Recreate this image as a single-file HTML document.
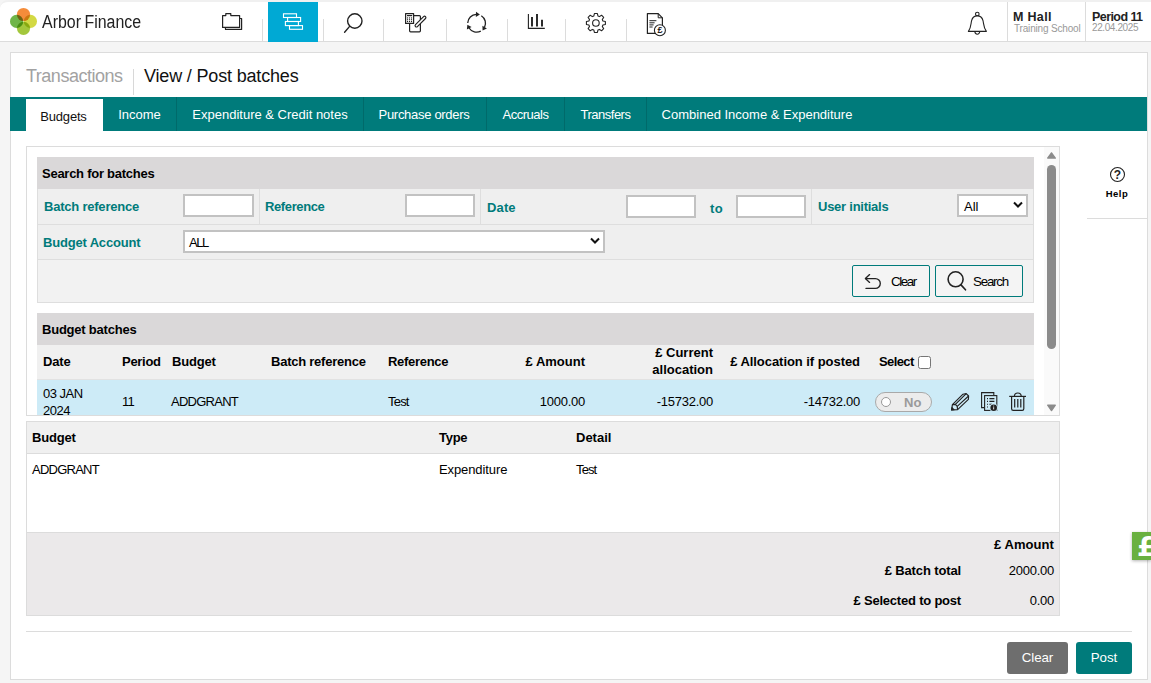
<!DOCTYPE html>
<html lang="en">
<head>
<meta charset="utf-8">
<title>Arbor Finance - View / Post batches</title>
<style>
*{box-sizing:border-box;margin:0;padding:0}
html,body{width:1151px;height:683px;overflow:hidden}
body{background:#f5f5f5;font-family:"Liberation Sans",sans-serif;font-size:13px;color:#000;position:relative}
.abs{position:absolute}
/* header */
#hdr{position:absolute;left:0;top:0;width:1151px;height:42px;background:#fff;border-top:2px solid #f0f0f0;border-bottom:1px solid #dcdcdc;border-top-left-radius:8px}
#hdr .sep{position:absolute;width:1px;background:#dcdcdc;top:17px;height:22px}
#hdr .vsep{position:absolute;width:1px;background:#dcdcdc;top:0;height:40px}
#logo-text{position:absolute;left:42px;top:8px;font-size:18px;line-height:24px;color:#222;white-space:nowrap;transform:scaleX(.885);transform-origin:0 0}
#nav-active{position:absolute;left:268px;top:0;width:50px;height:40px;background:#00a9d4}
.uname{position:absolute;font-weight:bold;font-size:12.5px;line-height:14px;white-space:nowrap;color:#222}
.usub{position:absolute;font-size:10px;line-height:12px;white-space:nowrap;color:#999}
/* panel */
#panel{position:absolute;left:10px;top:52px;width:1138px;height:628px;background:#fff;border:1px solid #dcdcdc}
#crumb1{position:absolute;left:26px;top:64px;font-size:18px;line-height:24px;color:#a2a2a2;white-space:nowrap}
#crumbsep{position:absolute;left:133px;top:69px;width:1px;height:26px;background:#d8d8d8}
#crumb2{position:absolute;left:144px;top:64px;font-size:18px;line-height:24px;color:#111;white-space:nowrap}
#tabs{position:absolute;left:10px;top:97px;width:1137px;height:34px;background:#007b7b}
.tab{position:absolute;top:0;height:34px;line-height:36px;color:#fff;font-size:13px;text-align:center;white-space:nowrap;border-right:1px solid #006a6a}
.tab.on{top:2px;height:32px;line-height:36px;background:#fff;color:#111;border-right:0}
/* scroll box */
#sbox{position:absolute;left:26px;top:146px;width:1034px;height:270px;border:1px solid #dcdcdc;background:#fff;overflow:hidden}
#strack{position:absolute;left:1044px;top:147px;width:15px;height:268px;background:#fafafa}
#sthumb{position:absolute;left:1047px;top:165px;width:9px;height:184px;border-radius:5px;background:#8b8b8b}
.sect-h{position:absolute;left:37px;width:997px;height:32px;background:#dad8d9;font-weight:bold;font-size:13px;line-height:34px;padding-left:5px}
.lbl{position:absolute;font-weight:bold;color:#007b7b;font-size:13px;line-height:16px;white-space:nowrap}
.inp{position:absolute;height:23px;background:#fff;border:2px solid #c2c2c2}
.th{position:absolute;font-weight:bold;font-size:13px;line-height:17px;white-space:nowrap}
.td{position:absolute;font-size:13px;line-height:17px;white-space:nowrap}
.r{text-align:right}
.btn2{position:absolute;height:32px;border:1px solid #007b7b;border-radius:2px;background:#f4f4f4;font-size:13.33px;line-height:32px;color:#000;white-space:nowrap}
.fbtn{position:absolute;top:642px;height:32px;border-radius:3px;color:#fff;font-size:13.33px;line-height:32px;text-align:center}
</style>
<style id="fit">
#crumb1{letter-spacing:-0.49px;margin-left:0px;}
#crumb2{letter-spacing:-0.17px;margin-left:0px;}
#t1{letter-spacing:-0.2px;position:relative;left:-1px;}
#t2{letter-spacing:-0.0px;position:relative;left:0px;}
#t3{letter-spacing:0.0px;position:relative;left:0px;}
#t4{letter-spacing:-0.3px;position:relative;left:-1px;}
#t5{letter-spacing:-0.49px;position:relative;left:0px;}
#t6{letter-spacing:-0.51px;position:relative;left:0px;}
#t7{letter-spacing:0.0px;position:relative;left:-1px;}
#sh1{letter-spacing:-0.26px;position:relative;left:0px;}
#sh2{letter-spacing:-0.22px;position:relative;left:0px;}
#l1{letter-spacing:-0.22px;margin-left:1px;}
#l2{letter-spacing:-0.38px;margin-left:1px;}
#l3{letter-spacing:0.13px;margin-left:1px;}
#l4{letter-spacing:0.3px;margin-left:0px;}
#l5{letter-spacing:-0.25px;margin-left:0px;}
#l6{letter-spacing:-0.18px;margin-left:0px;}
#h1{letter-spacing:-0.13px;margin-left:0px;}
#h2{letter-spacing:-0.28px;margin-left:1px;}
#h3{letter-spacing:-0.2px;margin-left:1px;}
#h4{letter-spacing:-0.24px;margin-left:1px;}
#h5{letter-spacing:-0.3px;margin-left:0px;}
#h6{letter-spacing:0.0px;margin-right:0px;}
#h8{letter-spacing:-0.05px;margin-right:0px;}
#h9{letter-spacing:-0.6px;margin-left:1px;}
#d2{letter-spacing:-0.8px;margin-left:0px;}
#d3{letter-spacing:-0.74px;margin-left:0px;}
#d5{letter-spacing:-0.8px;margin-left:0px;}
#d6{letter-spacing:-0.25px;margin-right:0px;}
#d7{letter-spacing:-0.25px;margin-right:0px;}
#d8{letter-spacing:-0.25px;margin-right:0px;}
#e1{letter-spacing:-0.18px;margin-left:0px;}
#e2{letter-spacing:-0.27px;margin-left:0px;}
#e3{letter-spacing:0.0px;margin-left:1px;}
#f1{letter-spacing:-0.76px;margin-left:0px;}
#f2{letter-spacing:-0.1px;margin-left:0px;}
#f3{letter-spacing:-0.87px;margin-left:1px;}
#g1{letter-spacing:0.07px;margin-right:0px;}
#g2{letter-spacing:-0.13px;margin-right:0px;}
#g3{letter-spacing:-0.25px;margin-right:0px;}
#g4{letter-spacing:-0.21px;margin-right:0px;}
#g5{letter-spacing:-0.25px;margin-right:0px;}
#u1{letter-spacing:0.32px;margin-left:0px;}
#u2{letter-spacing:-0.17px;margin-left:1px;}
#u3{letter-spacing:-0.57px;margin-left:1px;}
#u4{letter-spacing:-0.4px;margin-left:1px;}
#fb1{letter-spacing:-0.1px;position:relative;left:0px;}
#help{letter-spacing:0.5px;position:relative;left:0px;}
#bclear{letter-spacing:-1.4px;margin-left:2px;}
#bsearch{letter-spacing:-1.2px;margin-left:2px;}
#selALL{letter-spacing:-1.4px;margin-left:0px;}
#selall{letter-spacing:0.0px;margin-left:1px;}
</style>
</head>
<body>

<div id="hdr">
  <div id="logo-text"><span id="lg1">Arbor</span><span id="lg2" style="margin-left:4px">Finance</span></div>
  <div id="nav-active"></div>
  <div class="sep" style="left:262px"></div>
  <div class="sep" style="left:323px"></div>
  <div class="sep" style="left:383px"></div>
  <div class="sep" style="left:446px"></div>
  <div class="sep" style="left:507px"></div>
  <div class="sep" style="left:565px"></div>
  <div class="sep" style="left:626px"></div>
  <div class="vsep" style="left:1007px"></div>
  <div class="vsep" style="left:1085px"></div>
  <div class="uname" id="u1" style="left:1013px;top:8px">M Hall</div>
  <div class="usub" id="u2" style="left:1013px;top:21px">Training School</div>
  <div class="uname" id="u3" style="left:1091px;top:8px">Period 11</div>
  <div class="usub" id="u4" style="left:1091px;top:20px">22.04.2025</div>
</div>

<div id="panel"></div>
<div id="crumb1">Transactions</div>
<div id="crumbsep"></div>
<div id="crumb2">View / Post batches</div>

<div id="tabs">
  <div class="tab on" style="left:16px;width:77px"><span id="t1">Budgets</span></div>
  <div class="tab" style="left:93px;width:74px"><span id="t2">Income</span></div>
  <div class="tab" style="left:167px;width:187px"><span id="t3">Expenditure &amp; Credit notes</span></div>
  <div class="tab" style="left:354px;width:123px"><span id="t4">Purchase orders</span></div>
  <div class="tab" style="left:477px;width:78px"><span id="t5">Accruals</span></div>
  <div class="tab" style="left:555px;width:82px"><span id="t6">Transfers</span></div>
  <div class="tab" style="left:637px;width:222px;border-right:0"><span id="t7">Combined Income &amp; Expenditure</span></div>
</div>

<div id="sbox"></div>
<div id="strack"></div>
<div id="sthumb"></div>

<div class="sect-h" style="top:157px"><span id="sh1">Search for batches</span></div>
<div class="sect-h" style="top:313px"><span id="sh2">Budget batches</span></div>

<!-- search form -->
<div class="abs" style="left:37px;top:189px;width:997px;height:36px;background:#efefef;border:1px solid #dedede;border-top:0"></div>
<div class="abs" style="left:37px;top:225px;width:997px;height:35px;background:#efefef;border:1px solid #dedede;border-top:0"></div>
<div class="abs" style="left:37px;top:260px;width:997px;height:43px;background:#f2f2f2;border:1px solid #dedede;border-top:0"></div>
<div class="abs" style="left:259px;top:189px;width:1px;height:35px;background:#dedede"></div>
<div class="abs" style="left:480px;top:189px;width:1px;height:35px;background:#dedede"></div>
<div class="abs" style="left:811px;top:189px;width:1px;height:35px;background:#dedede"></div>
<div class="lbl" id="l1" style="left:43px;top:199px">Batch reference</div>
<div class="inp" style="left:183px;top:194px;width:71px"></div>
<div class="lbl" id="l2" style="left:264px;top:199px">Reference</div>
<div class="inp" style="left:405px;top:194px;width:70px"></div>
<div class="lbl" id="l3" style="left:486px;top:200px">Date</div>
<div class="inp" style="left:626px;top:195px;width:70px"></div>
<div class="lbl" id="l4" style="left:710px;top:201px">to</div>
<div class="inp" style="left:736px;top:195px;width:70px"></div>
<div class="lbl" id="l5" style="left:818px;top:199px">User initials</div>
<div class="inp" style="left:957px;top:194px;width:71px"></div>
<div class="td" id="selall" style="left:963px;top:198px">All</div>
<svg class="abs" style="left:1013px;top:201px" width="10" height="8" viewBox="0 0 10 8"><path d="M1 1.5 L5 5.5 L9 1.5" fill="none" stroke="#111" stroke-width="2"/></svg>
<div class="lbl" id="l6" style="left:43px;top:235px">Budget Account</div>
<div class="inp" style="left:183px;top:230px;width:422px"></div>
<div class="td" id="selALL" style="left:189px;top:234px">ALL</div>
<svg class="abs" style="left:590px;top:237px" width="10" height="8" viewBox="0 0 10 8"><path d="M1 1.5 L5 5.5 L9 1.5" fill="none" stroke="#111" stroke-width="2"/></svg>
<div class="btn2" style="left:852px;top:265px;width:78px"><span class="abs" id="bclear" style="left:36px;top:0">Clear</span></div>
<div class="btn2" style="left:935px;top:265px;width:88px"><span class="abs" id="bsearch" style="left:35px;top:0">Search</span></div>

<!-- batches table -->
<div class="abs" style="left:37px;top:345px;width:997px;height:35px;background:#f0f0f0;border-bottom:1px solid #e2e2e2"></div>
<div class="abs" style="left:37px;top:380px;width:997px;height:35px;background:#cdebf7"></div>
<div class="th" id="h1" style="left:43px;top:353px">Date</div>
<div class="th" id="h2" style="left:121px;top:353px">Period</div>
<div class="th" id="h3" style="left:171px;top:353px">Budget</div>
<div class="th" id="h4" style="left:270px;top:353px">Batch reference</div>
<div class="th" id="h5" style="left:388px;top:353px">Reference</div>
<div class="th r" id="h6" style="right:566px;top:353px">&pound; Amount</div>
<div class="th r" id="h7" style="right:438px;top:344px">&pound; Current<br>allocation</div>
<div class="th r" id="h8" style="right:291px;top:353px">&pound; Allocation if posted</div>
<div class="th" id="h9" style="left:878px;top:353px">Select</div>
<div class="abs" style="left:918px;top:356px;width:13px;height:13px;background:#fff;border:1px solid #767676;border-radius:2.5px"></div>
<div class="td" id="d1" style="left:43px;top:385px;letter-spacing:-0.5px">03 JAN<br>2024</div>
<div class="td" id="d2" style="left:122px;top:393px">11</div>
<div class="td" id="d3" style="left:171px;top:393px">ADDGRANT</div>
<div class="td" id="d5" style="left:388px;top:393px">Test</div>
<div class="td r" id="d6" style="right:566px;top:393px">1000.00</div>
<div class="td r" id="d7" style="right:438px;top:393px">-15732.00</div>
<div class="td r" id="d8" style="right:291px;top:393px">-14732.00</div>
<div class="abs" style="left:875px;top:392px;width:57px;height:20px;border:1px solid #a9a9a9;border-radius:10px;background:#ececec"></div>
<div class="abs" style="left:881px;top:397px;width:10px;height:10px;border:1px solid #999;border-radius:5px;background:#fff"></div>
<div class="abs" id="tno" style="left:904px;top:394px;font-weight:bold;font-size:13px;line-height:17px;color:#9a9a9a">No</div>

<!-- details -->
<div class="abs" style="left:26px;top:421px;width:1034px;height:195px;border:1px solid #dcdcdc;background:#fff"></div>
<div class="abs" style="left:27px;top:422px;width:1032px;height:32px;background:#f0f0f0;border-bottom:1px solid #dcdcdc"></div>
<div class="th" id="e1" style="left:32px;top:429px">Budget</div>
<div class="th" id="e2" style="left:439px;top:429px">Type</div>
<div class="th" id="e3" style="left:575px;top:429px">Detail</div>
<div class="td" id="f1" style="left:32px;top:461px">ADDGRANT</div>
<div class="td" id="f2" style="left:439px;top:461px">Expenditure</div>
<div class="td" id="f3" style="left:575px;top:461px">Test</div>
<div class="abs" style="left:27px;top:532px;width:1032px;height:83px;background:#ebe9ea;border-top:1px solid #dcdcdc"></div>
<div class="th r" id="g1" style="right:97px;top:536px">&pound; Amount</div>
<div class="th r" id="g2" style="right:190px;top:562px">&pound; Batch total</div>
<div class="td r" id="g3" style="right:97px;top:562px">2000.00</div>
<div class="th r" id="g4" style="right:190px;top:592px">&pound; Selected to post</div>
<div class="td r" id="g5" style="right:97px;top:592px">0.00</div>
<div class="abs" style="left:26px;top:631px;width:1106px;height:1px;background:#dcdcdc"></div>

<!-- help -->
<div class="abs" style="left:1087px;top:189px;width:60px;text-align:center;font-weight:bold;font-size:9.5px;line-height:10px"><span id="help">Help</span></div>
<div class="abs" style="left:1087px;top:218px;width:60px;height:1px;background:#dcdcdc"></div>
<div class="abs" style="left:1132px;top:532px;width:19px;height:28px;background:#69b040;box-shadow:0 1px 3px rgba(0,0,0,.3);overflow:hidden"><span class="abs" id="pound" style="left:5px;top:1px;color:#fff;font-family:'DejaVu Sans',sans-serif;font-weight:bold;font-size:27px;line-height:28px">&pound;</span></div>

<div class="fbtn" style="left:1007px;width:61px;background:#6e6e6e"><span id="fb1">Clear</span></div>
<div class="fbtn" style="left:1076px;width:56px;background:#007b7b"><span id="fb2">Post</span></div>


<svg class="abs" style="left:0;top:0;pointer-events:none" width="1151" height="683" viewBox="0 0 1151 683">
  <!-- logo -->
  <g style="isolation:isolate">
    <circle cx="23.5" cy="14.5" r="6.6" fill="#f58c3a"/>
    <circle cx="16.6" cy="21.4" r="6.6" fill="#70b548" style="mix-blend-mode:multiply"/>
    <circle cx="30.4" cy="21.4" r="6.6" fill="#d3d944" style="mix-blend-mode:multiply"/>
    <circle cx="23.5" cy="28.3" r="6.6" fill="#a3c73c" style="mix-blend-mode:multiply"/>
  </g>
  <!-- folder -->
  <g fill="#fff" stroke="#222" stroke-width="1.2" stroke-linejoin="round">
    <path d="M225 18.5 H241.6 V29.4 H225.5 Z"/>
    <path d="M222.6 15.6 H225.8 V13.6 H230.8 V15.6 H239.6 V27.4 H222.6 Z"/>
  </g>
  <!-- stack (active) -->
  <g fill="none" stroke="#fff" stroke-width="1.1">
    <rect x="283.5" y="13.8" width="13" height="3.7"/>
    <rect x="287.6" y="17.5" width="13" height="4"/>
    <rect x="285.4" y="21.5" width="13" height="4.1"/>
    <rect x="289.5" y="25.6" width="13" height="3.7"/>
  </g>
  <!-- search -->
  <g fill="none" stroke="#222" stroke-width="1.4" stroke-linecap="round">
    <circle cx="354.8" cy="21" r="7.2"/>
    <path d="M349.6 26.4 L344.6 32.2"/>
  </g>
  <!-- calc + pen -->
  <g fill="#fff" stroke="#222" stroke-width="1.2" stroke-linejoin="round">
    <rect x="409.6" y="15.6" width="10.8" height="16.2" rx="1"/>
    <rect x="405.6" y="13.6" width="8" height="9.8"/>
    <path d="M423.6 16.6 a1.3 1.3 0 0 1 1.9 1.9 L417.4 26.6 a1.3 1.3 0 0 1 -1.9 -1.9 Z"/>
  </g>
  <g fill="#222">
    <rect x="407" y="15" width="5.2" height="1.2"/>
    <rect x="407" y="17.4" width="1.1" height="1.1"/><rect x="409" y="17.4" width="1.1" height="1.1"/><rect x="411" y="17.4" width="1.1" height="1.1"/>
    <rect x="407" y="19.2" width="1.1" height="1.1"/><rect x="409" y="19.2" width="1.1" height="1.1"/><rect x="411" y="19.2" width="1.1" height="1.1"/>
    <rect x="407" y="21" width="1.1" height="1.1"/><rect x="409" y="21" width="1.1" height="1.1"/><rect x="411" y="21" width="1.1" height="1.1"/>
  </g>
  <!-- sync -->
  <path d="M467.71 22.99 A8.90 8.90 0 0 1 476.29 14.41" fill="none" stroke="#222" stroke-width="1.3"/><path d="M479.88 14.51 L476.01 11.73 L475.83 17.01 Z" fill="#222"/><path d="M481.32 15.75 A8.90 8.90 0 0 1 484.46 27.48" fill="none" stroke="#222" stroke-width="1.3"/><path d="M482.57 30.53 L486.91 28.58 L482.43 25.78 Z" fill="#222"/><path d="M480.78 31.16 A8.90 8.90 0 0 1 469.05 28.02" fill="none" stroke="#222" stroke-width="1.3"/><path d="M467.35 24.86 L466.88 29.59 L471.54 27.11 Z" fill="#222"/>
  <!-- chart -->
  <g fill="none" stroke="#222">
    <path d="M528.4 13.9 V28.4 H544.8" stroke-width="1.1"/>
    <path d="M532 17 V26.5 M537 14.1 V26.5 M542 19.8 V26.5" stroke-width="1.9"/>
  </g>
  <!-- gear -->
  <path d="M593.86 15.99 L594.40 13.52 L597.40 13.52 L597.94 15.99 L599.42 16.60 L601.54 15.23 L603.67 17.36 L602.30 19.48 L602.91 20.96 L605.38 21.50 L605.38 24.50 L602.91 25.04 L602.30 26.52 L603.67 28.64 L601.54 30.77 L599.42 29.40 L597.94 30.01 L597.40 32.48 L594.40 32.48 L593.86 30.01 L592.38 29.40 L590.26 30.77 L588.13 28.64 L589.50 26.52 L588.89 25.04 L586.42 24.50 L586.42 21.50 L588.89 20.96 L589.50 19.48 L588.13 17.36 L590.26 15.23 L592.38 16.60Z" fill="none" stroke="#222" stroke-width="1.1" stroke-linejoin="round"/>
  <circle cx="595.9" cy="23" r="3.3" fill="none" stroke="#222" stroke-width="1.1"/>
  <!-- doc pound -->
  <g fill="#fff" stroke="#222" stroke-width="1.2" stroke-linejoin="round">
    <path d="M647.4 13.6 H658.2 L662.4 17.8 V33.4 H647.4 Z"/>
    <path d="M658.2 13.6 V17.8 H662.4" fill="none" stroke-width="1"/>
  </g>
  <path d="M649.4 20.7 H656.4 M649.4 22.8 H654.6 M649.4 24.9 H653.6 M649.4 27 H652.6" stroke="#222" stroke-width="1" fill="none"/>
  <circle cx="659.9" cy="30.3" r="5.5" fill="#fff" stroke="#222" stroke-width="1.1"/>
  <text x="659.9" y="33.4" text-anchor="middle" font-family="Liberation Sans, sans-serif" font-weight="bold" font-size="9" fill="#222">&#163;</text>
  <!-- bell -->
  <g fill="none" stroke="#222" stroke-width="1.1" stroke-linejoin="round">
    <circle cx="977.3" cy="14.1" r="1.8"/>
    <path d="M968.4 31.4 C971.2 27.6 970.8 23.5 971.6 20.6 C972.4 17.6 974.6 15.9 977.3 15.9 C980 15.9 982.2 17.6 983 20.6 C983.8 23.5 983.4 27.6 986.4 31.4 Z" fill="#fff"/>
    <path d="M974.9 31.6 A2.4 2.6 0 0 0 979.7 31.6"/>
  </g>
  <!-- help -->
  <circle cx="1117.5" cy="174.5" r="7" fill="none" stroke="#222" stroke-width="1.1"/>
  <text x="1117.5" y="179" text-anchor="middle" font-family="Liberation Sans, sans-serif" font-weight="bold" font-size="12" fill="#222">?</text>
  <!-- scroll arrows -->
  <path d="M1047.7 158.1 L1051.5 152.9 L1055.3 158.1 Z" fill="#8b8b8b" stroke="#8b8b8b" stroke-width="1.4" stroke-linejoin="round"/>
  <path d="M1047.7 405.2 L1051.5 410.5 L1055.3 405.2 Z" fill="#8b8b8b" stroke="#8b8b8b" stroke-width="1.4" stroke-linejoin="round"/>
  <!-- button icons -->
  <g fill="none" stroke="#222" stroke-width="1.35" stroke-linecap="round" stroke-linejoin="round">
    <path d="M869.6 274.6 L865.4 278.6 L869.6 282.4"/>
    <path d="M865.8 278.6 H875.4 A4.9 4.9 0 0 1 875.4 288.4 H866"/>
  </g>
  <g fill="none" stroke="#222" stroke-width="1.6" stroke-linecap="round">
    <circle cx="955.6" cy="279.3" r="7.5"/>
    <path d="M961 284.9 L965.5 289.8"/>
  </g>
  <!-- row icons: pencil -->
  <g fill="none" stroke="#222" stroke-width="1.15" stroke-linejoin="round">
    <path d="M951.6 410 L952.4 404.6 L963 394.2 L966.2 393.6 L968.6 396 L968.4 399.4 L957.6 409.6 Z" fill="#cdebf7"/>
    <path d="M952.4 404.6 L955.4 404.4 L957.2 406.4 L957.6 409.6"/>
    <path d="M955.4 404.4 L966.2 393.6 M957.2 406.4 L968.6 396"/>
    <path d="M951.6 410 L952 407.6 L954 409.8 Z" fill="#222"/>
  </g>
  <!-- row icons: doc info -->
  <g fill="none" stroke="#222" stroke-width="1.1">
    <path d="M993.8 395 V392.6 H981.6 V407.6 H984"/>
    <rect x="984.6" y="395.6" width="12.2" height="14.8"/>
    <path d="M989.4 398.6 H994.4 M989.4 401.4 H994.4 M989.4 404.2 H992"/>
    <path d="M987 398.6 H988 M987 401.4 H988 M987 404.2 H988 M987 407 H988"/>
  </g>
  <circle cx="993.7" cy="407.7" r="4.3" fill="#cdebf7"/>
  <circle cx="993.7" cy="407.7" r="3.3" fill="#222"/>
  <rect x="993.25" y="407.2" width="0.9" height="2.2" fill="#fff"/><rect x="993.25" y="405.6" width="0.9" height="0.9" fill="#fff"/>
  <!-- row icons: trash -->
  <g fill="none" stroke="#222" stroke-width="1.2" stroke-linejoin="round">
    <path d="M1009.2 396.4 H1026"/>
    <path d="M1014.4 396.2 A3.4 3.2 0 0 1 1021.2 396.2"/>
    <path d="M1011.6 396.6 V408.8 A1.6 1.6 0 0 0 1013.2 410.4 H1022.2 A1.6 1.6 0 0 0 1023.8 408.8 V396.6"/>
    <path d="M1014.7 399 V407.6 M1017.8 399 V407.6 M1020.8 399 V407.6"/>
  </g>
</svg>
</body>
</html>
